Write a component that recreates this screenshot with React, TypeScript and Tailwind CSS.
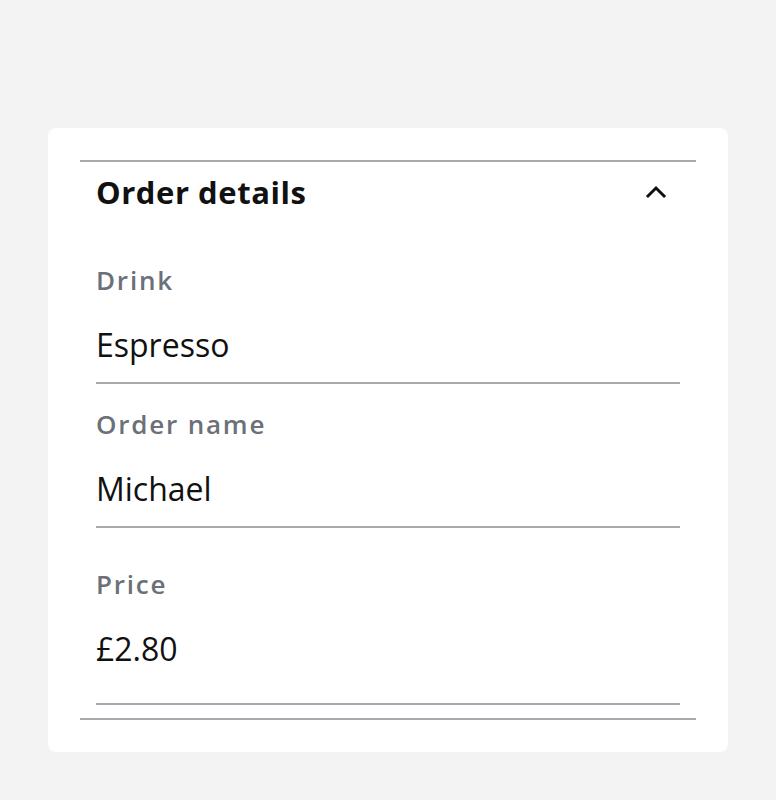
import React from "react";

const items = [
  { label: "Drink", value: "Espresso", pt: "pt-0", pb: "pb-[17px]" },
  { label: "Order name", value: "Michael", pt: "pt-[24px]", pb: "pb-[17px]" },
  { label: "Price", value: "£2.80", pt: "pt-[40px]", pb: "pb-[34px]" },
];

export default function App() {
  return (
    <div
      className="min-h-[800px] w-full bg-[#f3f3f3] pt-[128px] px-[48px]"
      style={{ fontFamily: '"Open Sans", "Noto Sans", sans-serif' }}
    >
      <div className="w-[680px] rounded-[8px] bg-white px-[32px] pt-[32px] pb-[32px]">
        <div className="border-t-2 border-b-2 border-[#a6a9ad] pb-[13px]">
          <div className="flex h-[60px] items-center justify-between pl-4 pr-[28px]">
            <h2 className="text-[31px] font-bold leading-[40px] tracking-[0.55px] text-[#111]">Order details</h2>
            <svg width="24" height="24" viewBox="0 0 24 24" fill="none">
              <path d="M4 16 L12 8 L20 16" stroke="#111" strokeWidth="3" strokeLinecap="square" />
            </svg>
          </div>
          <div className="mx-4 pt-[42px]">
            {items.map((it) => (
              <div key={it.label} className={`border-b-2 border-[#a6a9ad] ${it.pt} ${it.pb}`}>
                <div className="text-[26px] font-semibold leading-[32px] text-[#6b7079] tracking-[1.8px]">{it.label}</div>
                <div className="mt-[29px] text-[32px] leading-[40px] text-[#111]">{it.value}</div>
              </div>
            ))}
          </div>
        </div>
      </div>
    </div>
  );
}
